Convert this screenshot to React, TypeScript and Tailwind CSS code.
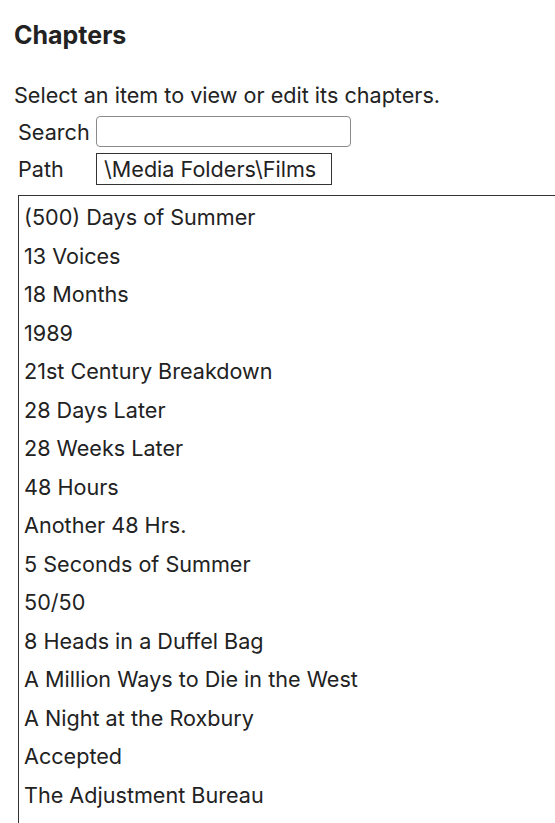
const films = [
  '(500) Days of Summer',
  '13 Voices',
  '18 Months',
  '1989',
  '21st Century Breakdown',
  '28 Days Later',
  '28 Weeks Later',
  '48 Hours',
  'Another 48 Hrs.',
  '5 Seconds of Summer',
  '50/50',
  '8 Heads in a Duffel Bag',
  'A Million Ways to Die in the West',
  'A Night at the Roxbury',
  'Accepted',
  'The Adjustment Bureau',
];

export default function App() {
  return (
    <div className="h-[823px] overflow-hidden bg-white text-[#222] font-['Inter',sans-serif]">
      <div className="pl-[14px] pt-[21px]">
        <h1 className="text-[25px] font-bold leading-[28px]">Chapters</h1>
        <p className="mt-[33px] text-[21.6px] leading-[26px]">Select an item to view or edit its chapters.</p>
      </div>
      <div className="pl-[18px] mt-[8px] flex flex-col gap-[6px]">
        <div className="flex items-center">
          <label className="w-[78px] text-[21.6px] leading-[26px]">Search</label>
          <input className="w-[255px] h-[31px] rounded-[4px] border border-[#8a8a8a] px-[6px] text-[20px] outline-none" />
        </div>
        <div className="flex items-center">
          <span className="w-[78px] text-[21.6px] leading-[26px]">Path</span>
          <div className="w-[236px] h-[32px] border border-[#333] px-[7px] text-[21.6px] leading-[30px]">\Media Folders\Films</div>
        </div>
      </div>
      <div className="ml-[18px] mt-[10px] w-[560px] h-[700px] border border-[#333] pl-[5px] pt-[2px]">
        {films.map((f) => (
          <div key={f} className="h-[38.5px] text-[21.6px] leading-[38.5px] whitespace-nowrap">{f}</div>
        ))}
      </div>
    </div>
  );
}
